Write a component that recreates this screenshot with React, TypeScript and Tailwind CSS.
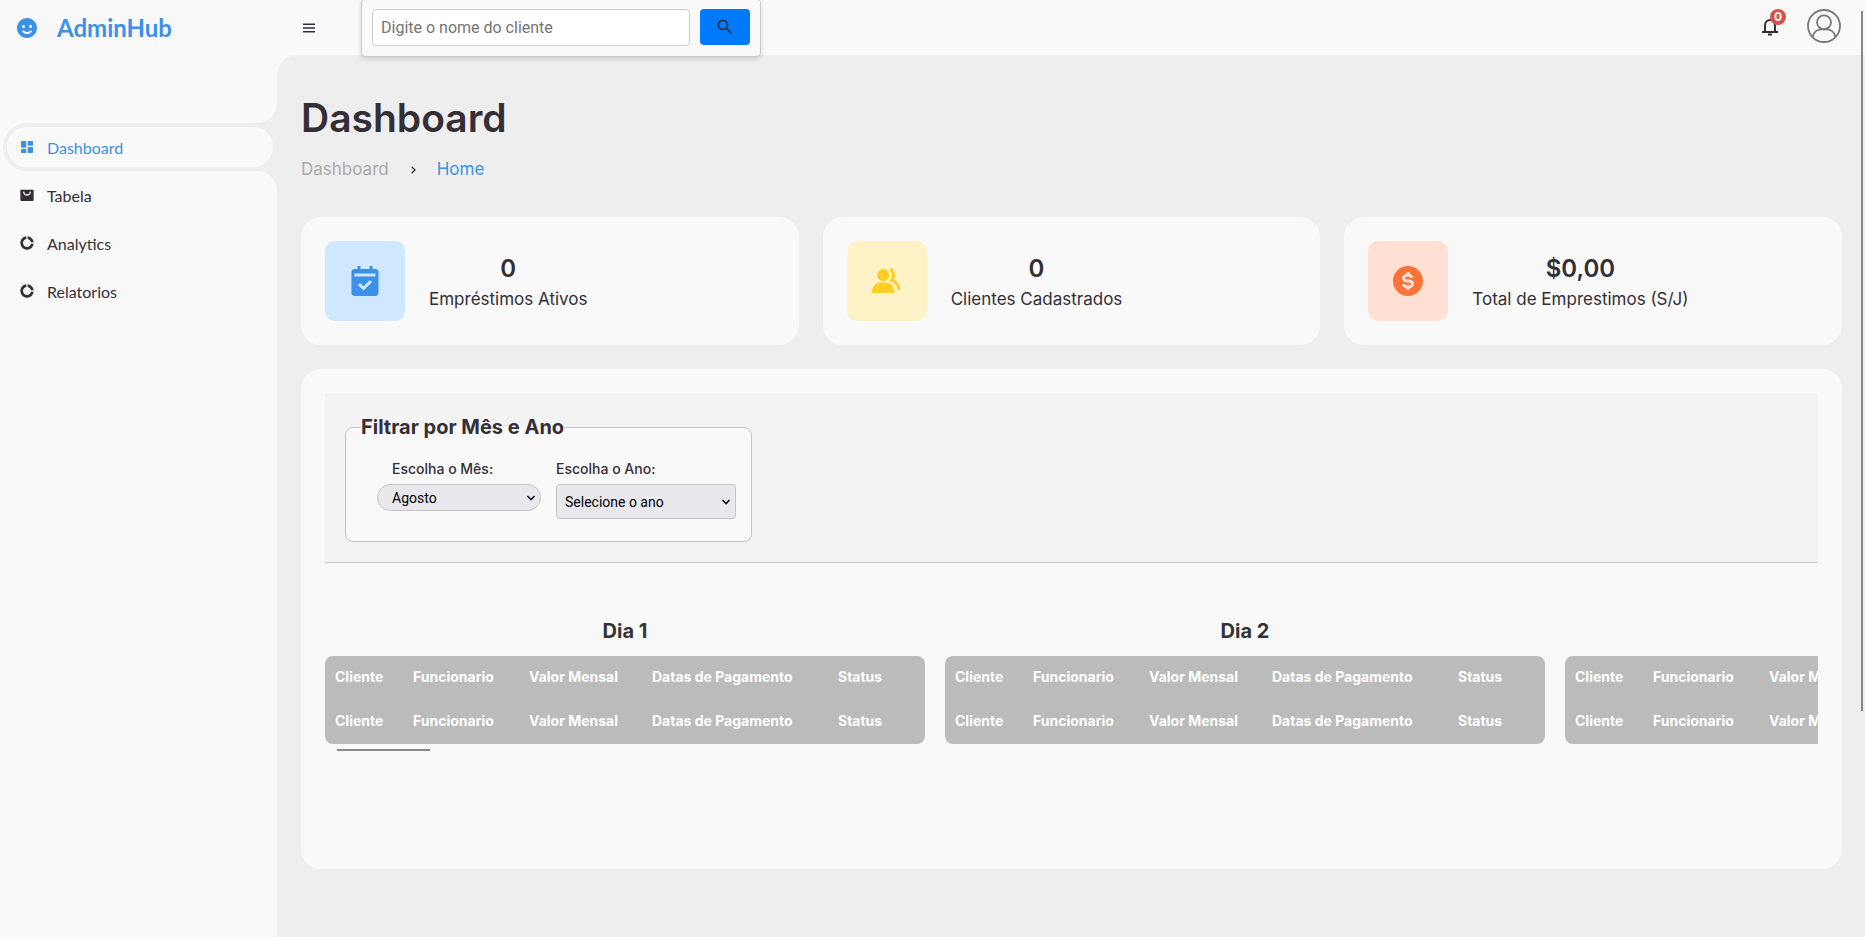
import type { ReactNode } from 'react';
import {
  BiChevronRight,
  BiMenu,
  BiSolidCalendarCheck,
  BiSolidDashboard,
  BiSolidDollarCircle,
  BiSolidDoughnutChart,
  BiSolidGroup,
  BiSolidShoppingBagAlt,
  BiSolidSmile,
} from 'react-icons/bi';
import { MdNotificationsNone, MdSearch } from 'react-icons/md';

const menuItems = [
  { label: 'Tabela', icon: <BiSolidShoppingBagAlt /> },
  { label: 'Analytics', icon: <BiSolidDoughnutChart /> },
  { label: 'Relatorios', icon: <BiSolidDoughnutChart /> },
];

const columns = ['Cliente', 'Funcionario', 'Valor Mensal', 'Datas de Pagamento', 'Status'];

function Sidebar() {
  return (
    <aside className="w-[277px] shrink-0 bg-[#f9f9f9] font-['Lato',sans-serif] text-[#342e37]">
      <a href="#" className="flex h-14 items-center pl-[15px] text-2xl font-bold text-[#3c91e6]">
        <BiSolidSmile className="mr-[18px] size-6" />
        AdminHub
      </a>
      <nav className="mt-[67px]">
        <ul>
          <li className="relative ml-[3px] h-12 rounded-l-full bg-[#eee] p-1">
            <span className="absolute -top-5 right-0 size-5 bg-[#eee]">
              <span className="block size-5 rounded-br-[20px] bg-[#f9f9f9]" />
            </span>
            <span className="absolute -bottom-5 right-0 size-5 bg-[#eee]">
              <span className="block size-5 rounded-tr-[20px] bg-[#f9f9f9]" />
            </span>
            <a href="#" className="flex h-10 items-center rounded-full bg-[#f9f9f9] pl-3 text-[#3c91e6]">
              <BiSolidDashboard className="mr-3 size-4" />
              <span className="pt-[2px]">Dashboard</span>
            </a>
          </li>
          {menuItems.map((item) => (
            <li key={item.label} className="ml-[3px] h-12 p-1">
              <a href="#" className="flex h-10 items-center pl-3">
                <span className="mr-3 [&>svg]:size-4">{item.icon}</span>
                <span className="pt-[2px]">{item.label}</span>
              </a>
            </li>
          ))}
        </ul>
      </nav>
    </aside>
  );
}

function Header() {
  return (
    <header className="relative z-10 flex h-[55px] items-center pr-6 pl-[23px]">
      <button type="button" aria-label="Menu" className="mr-[43px]">
        <BiMenu className="size-[18px]" />
      </button>
      <form className="flex w-[400px] gap-[10px] rounded-[5px] border border-[#ccc] bg-[#f9f9f9] p-[10px] shadow-[0_2px_5px_rgba(0,0,0,0.15)]">
        <input
          type="text"
          aria-label="Nome do cliente"
          placeholder="Digite o nome do cliente"
          className="h-[37px] min-w-0 flex-1 rounded-[4px] border border-[#ccc] bg-white px-2 font-['Roboto',sans-serif] text-base placeholder:text-[#757575]"
        />
        <button
          type="submit"
          aria-label="Buscar"
          className="flex h-9 w-[50px] items-center justify-center rounded-[4px] bg-[#007bff]"
        >
          <MdSearch className="size-5" />
        </button>
      </form>
      <div className="ml-auto flex items-center gap-[25px] pb-[3px]">
        <a href="#" aria-label="Notificações" className="relative">
          <svg viewBox="0 0 24 24" className="size-6" fill="none" stroke="currentColor" strokeWidth="2">
            <path d="M4 18h16M7 18v-6.500c0-3.200 2-5.500 5-5.500s5 2.300 5 5.500V18" />
            <path d="M10 20.500h4" />
          </svg>
          <span className="absolute -top-[5px] -right-1 flex size-4 items-center justify-center rounded-full bg-[#db504a] text-xs font-bold text-[#f9f9f9]">
            0
          </span>
        </a>
        <a href="#" aria-label="Perfil">
          <svg viewBox="0 0 34 34" className="size-[34px]" fill="none" stroke="#777" strokeWidth="1.8">
            <circle cx="17" cy="17" r="16" />
            <circle cx="17" cy="13.3" r="7" />
            <path d="M5.5 28c1-5 5-7.700 9-7.700h5c4 0 8 2.700 9 7.700" />
          </svg>
        </a>
      </div>
    </header>
  );
}

type StatProps = { icon: ReactNode; tone: string; value: string; label: string };

function Stat({ icon, tone, value, label }: StatProps) {
  return (
    <li className="flex items-center gap-6 rounded-[20px] bg-[#f9f9f9] p-6">
      <span className={`flex size-20 items-center justify-center rounded-[10px] [&>svg]:size-9 ${tone}`}>{icon}</span>
      <div className="text-center">
        <h3 className="text-2xl leading-9 font-semibold">{value}</h3>
        <p className="text-[17px] leading-6">{label}</p>
      </div>
    </li>
  );
}

function Chevron() {
  return (
    <svg
      viewBox="0 0 10 6"
      className="pointer-events-none absolute top-1/2 right-[5px] h-[6px] w-[10px] -translate-y-1/2"
      fill="none"
      stroke="#111"
      strokeWidth="1.6"
    >
      <path d="M1.500 1l3.500 3.500L8.500 1" />
    </svg>
  );
}

function Filter() {
  return (
    <div className="border-b border-[#ccc] bg-[#f3f3f3] p-5 pt-[19px]">
      <fieldset className="h-[130px] w-[407px] rounded-lg border border-[#c4c4c4] bg-[#f9f9f9] px-[15px]">
        <legend className="text-xl leading-[30px] font-bold">Filtrar por Mês e Ano</legend>
        <div className="flex items-start gap-[15px] pt-4 pl-4 text-sm">
          <div className="w-[164px]">
            <label htmlFor="mes" className="block pl-[15px] leading-[21px] font-medium">
              Escolha o Mês:
            </label>
            <div className="relative mt-[5px]">
              <select
                id="mes"
                className="block h-[27px] w-full appearance-none rounded-full border border-[#c3c3c3] bg-[#e9e9ed] px-[14px] font-['Roboto',sans-serif] text-sm text-black"
              >
                <option>Agosto</option>
              </select>
              <Chevron />
            </div>
          </div>
          <div className="w-[180px]">
            <label htmlFor="ano" className="block leading-[21px] font-medium">
              Escolha o Ano:
            </label>
            <div className="relative mt-[5px]">
              <select
                id="ano"
                className="block h-[35px] w-full appearance-none rounded-[4px] border border-[#c3c3c3] bg-[#e9e9ed] px-2 font-['Roboto',sans-serif] text-sm text-black"
              >
                <option>Selecione o ano</option>
              </select>
              <Chevron />
            </div>
          </div>
        </div>
      </fieldset>
    </div>
  );
}

function HeadRow() {
  return (
    <tr className="h-11">
      {columns.map((name) => (
        <th key={name} scope="col" className="px-[10px] pb-[3px] text-left font-bold whitespace-nowrap">
          {name}
        </th>
      ))}
    </tr>
  );
}

function Day({ day }: { day: number }) {
  return (
    <section className="w-[600px] shrink-0">
      <h3 className="mb-[10px] text-center text-xl leading-[30px] font-bold text-[#333]">Dia {day}</h3>
      <table className="w-full table-fixed overflow-hidden rounded-lg bg-[#bbb] text-sm text-white">
        <colgroup>
          <col className="w-[78px]" />
          <col className="w-[116px]" />
          <col className="w-[123px]" />
          <col className="w-[186px]" />
          <col className="w-[97px]" />
        </colgroup>
        <thead>
          <HeadRow />
          <HeadRow />
        </thead>
      </table>
    </section>
  );
}

export default function App() {
  return (
    <div className="flex min-h-screen bg-[#f9f9f9] font-['Inter',sans-serif] text-[#342e37]">
      <Sidebar />
      <div className="relative flex min-w-0 flex-1 flex-col">
        <Header />
        <main className="flex-1 rounded-tl-[20px] bg-[#eee] pt-9 pr-[23px] pb-6 pl-6">
          <h1 className="text-[39px] leading-[54px] font-semibold">Dashboard</h1>
          <nav className="mt-3 flex h-[26px] items-center gap-4 text-[17px]">
            <a href="#" className="text-[#aaa]">
              Dashboard
            </a>
            <BiChevronRight className="size-4" />
            <a href="#" className="text-[#3c91e6]">
              Home
            </a>
          </nav>
          <ul className="mt-[34px] grid grid-cols-3 gap-6">
            <Stat
              icon={<BiSolidCalendarCheck />}
              tone="bg-[#cfe8ff] text-[#3c91e6]"
              value="0"
              label="Empréstimos Ativos"
            />
            <Stat
              icon={<BiSolidGroup />}
              tone="bg-[#fff2c6] text-[#ffce26]"
              value="0"
              label="Clientes Cadastrados"
            />
            <Stat
              icon={<BiSolidDollarCircle />}
              tone="bg-[#ffe0d3] text-[#fd7238]"
              value="$0,00"
              label="Total de Emprestimos (S/J)"
            />
          </ul>
          <section className="mt-6 rounded-[20px] bg-[#f9f9f9] px-6 pt-6 pb-[118px]">
            <Filter />
            <div className="mt-[53px] flex gap-5 overflow-x-auto [scrollbar-width:none]">
              <Day day={1} />
              <Day day={2} />
              <Day day={3} />
            </div>
            <div className="mt-[5px] ml-3 h-[2px] w-[93px] bg-[#888]" />
          </section>
        </main>
        <div className="absolute top-[11px] right-[2px] z-20 h-[700px] w-[2px] bg-[#888]" />
      </div>
    </div>
  );
}
